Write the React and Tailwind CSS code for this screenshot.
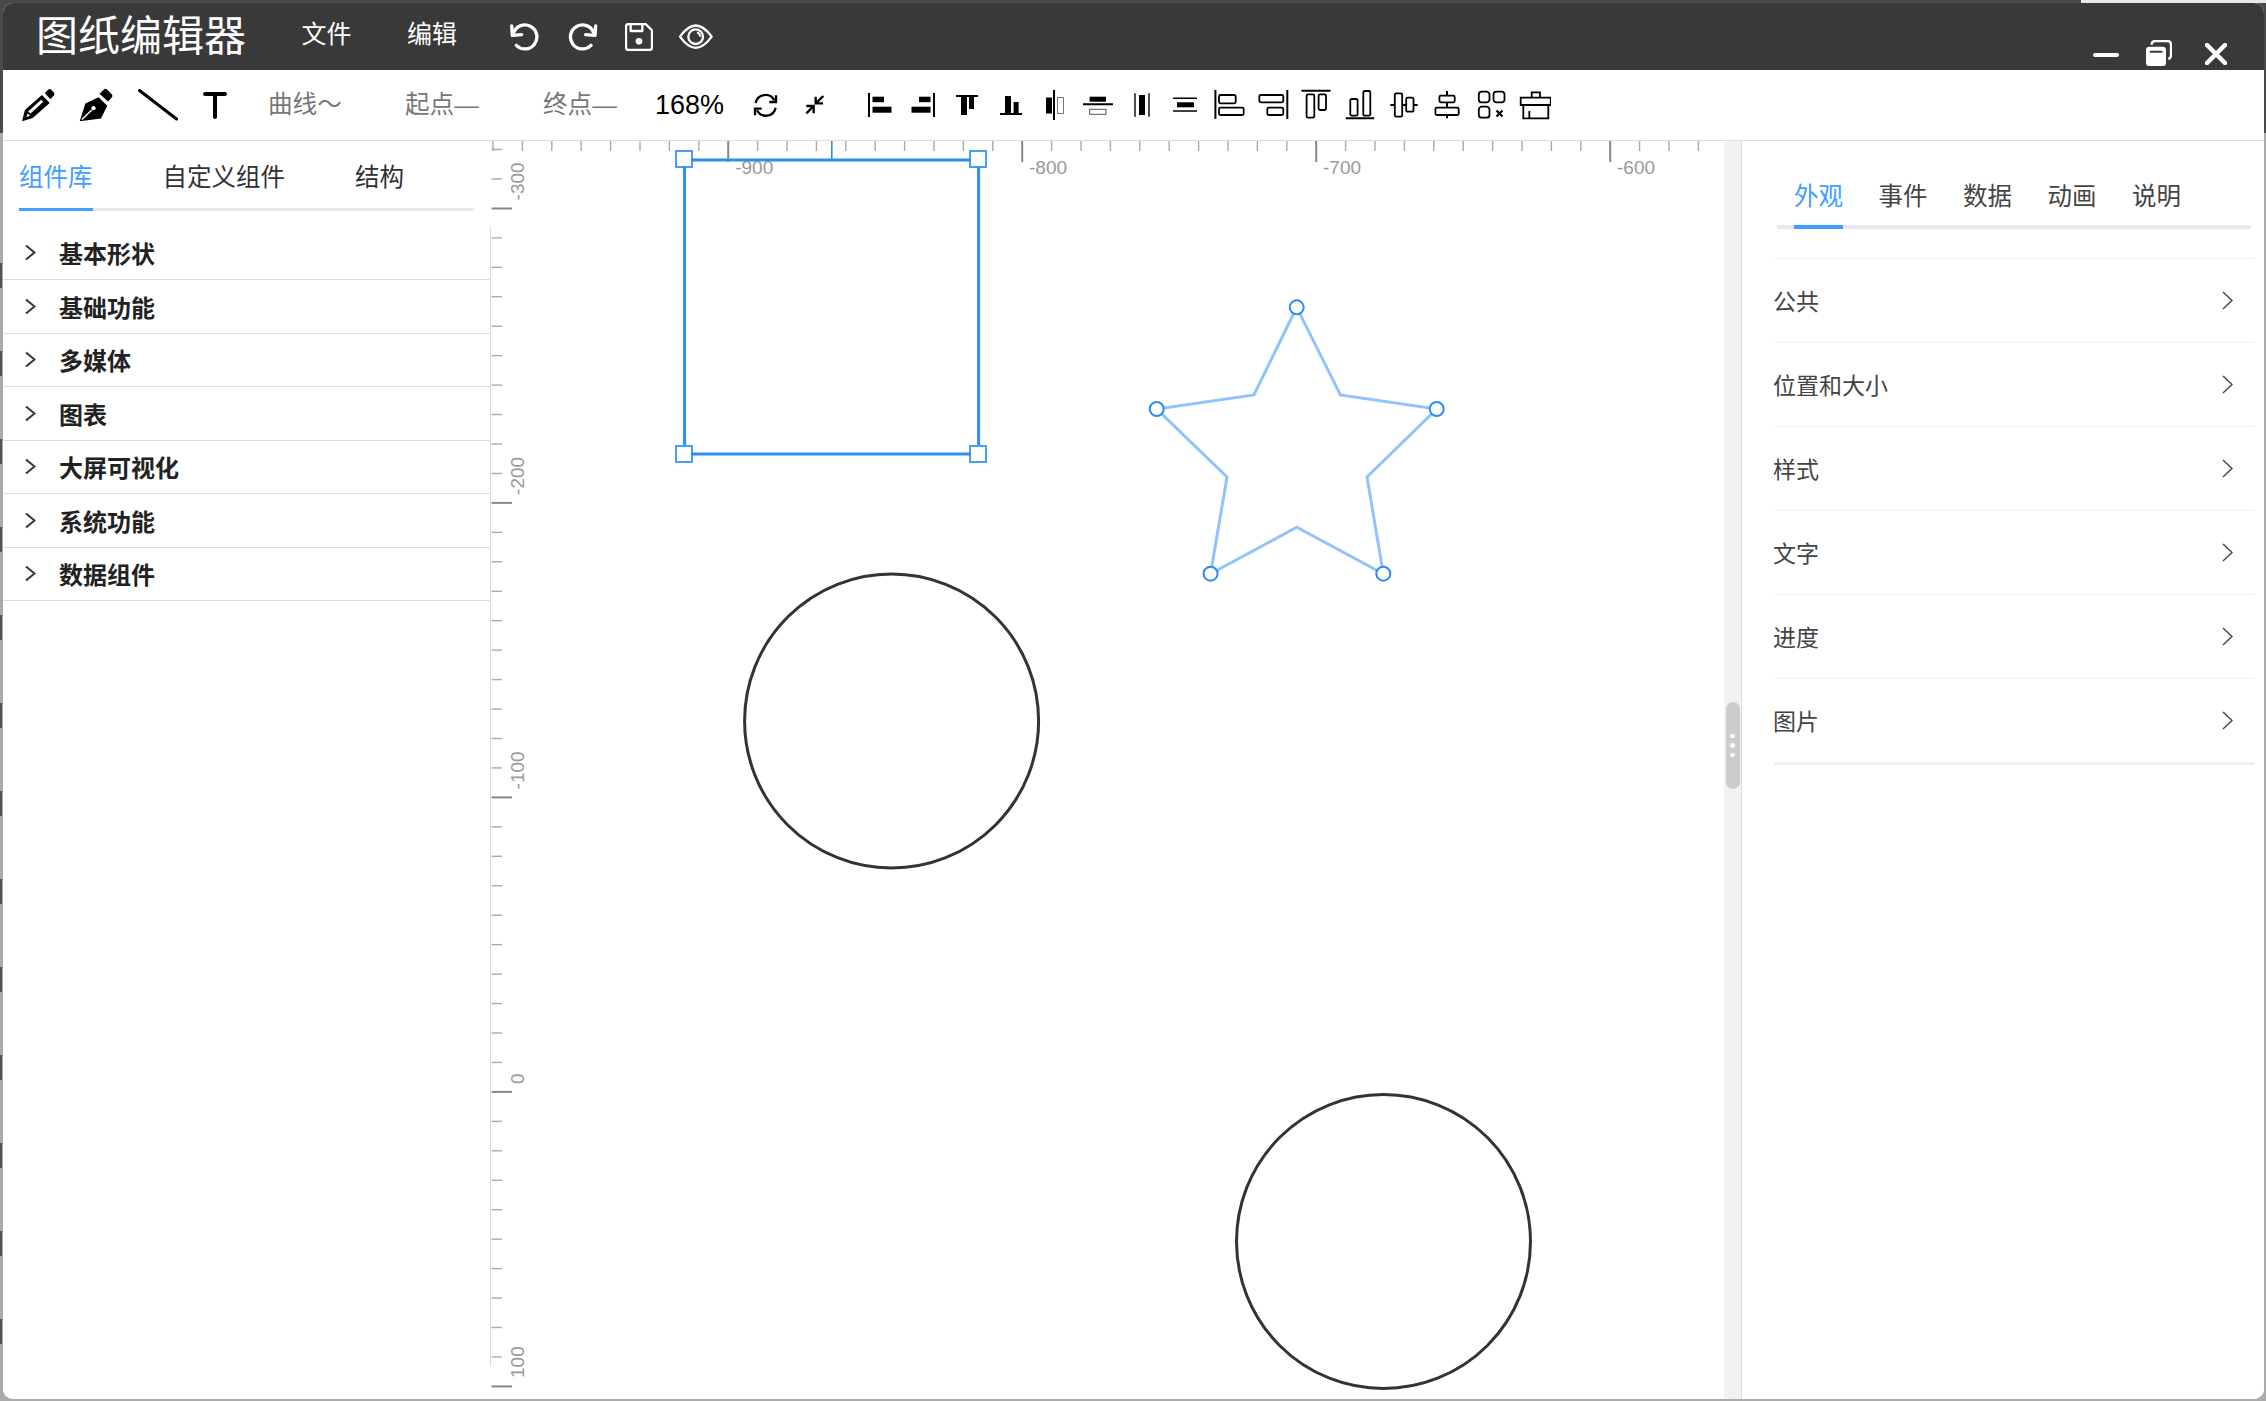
import React from "react";

const leftGroups = ["基本形状", "基础功能", "多媒体", "图表", "大屏可视化", "系统功能", "数据组件"];
const rightGroups = ["公共", "位置和大小", "样式", "文字", "进度", "图片"];
const rightTabs = ["外观", "事件", "数据", "动画", "说明"];

const Out = (props) => <rect fill="#fff" stroke="#000" strokeWidth="1.8" rx="1.5" {...props} />;
const Solid = (props) => <rect fill="#000" {...props} />;
const Ln = (props) => <line stroke="#000" strokeWidth="2" {...props} />;

// alignment buttons, drawn around a centre of 0,0
const alignIcons = [
  <><Ln x1="-11" y1="-12" x2="-11" y2="12" /><Solid x="-7.5" y="-8.3" width="11.5" height="5.5" /><Solid x="-7.5" y="1.7" width="19" height="6" /></>,
  <><Ln x1="11" y1="-12" x2="11" y2="12" /><Solid x="-4" y="-8.3" width="11.5" height="5.5" /><Solid x="-11.5" y="1.7" width="19" height="6" /></>,
  <><Ln x1="-11" y1="-9" x2="11" y2="-9" /><Solid x="-6" y="-8" width="6" height="18" /><Solid x="2" y="-8" width="5" height="12" /></>,
  <><Ln x1="-11" y1="9" x2="11" y2="9" /><Solid x="-6" y="-9" width="6" height="18" /><Solid x="2.6" y="-3" width="5" height="12" /></>,
  <><Ln x1="0" y1="-15" x2="0" y2="15" /><Solid x="-8" y="-7.5" width="6" height="16" /><rect x="3.5" y="-7.5" width="6" height="16" fill="#fff" stroke="#777" strokeWidth="1" /></>,
  <><Ln x1="-15" y1="-0.7" x2="15" y2="-0.7" /><Solid x="-8.4" y="-8.3" width="16.4" height="5" /><rect x="-8.4" y="4.3" width="16.4" height="5" fill="#fff" stroke="#555" strokeWidth="1" /></>,
  <><Ln x1="-7" y1="-11.7" x2="-7" y2="11.7" strokeWidth="1.4" /><Ln x1="7" y1="-11.7" x2="7" y2="11.7" strokeWidth="1.4" /><Solid x="-3" y="-10" width="6" height="20" /></>,
  <><Ln x1="-12" y1="-6.7" x2="12" y2="-6.7" strokeWidth="1.4" /><Ln x1="-12" y1="6" x2="12" y2="6" strokeWidth="1.4" /><Solid x="-8" y="-2.7" width="17" height="5" /></>,
  <><Ln x1="-13.6" y1="-15" x2="-13.6" y2="14" /><Out x="-10" y="-10" width="16.7" height="8.3" /><Out x="-10" y="2.7" width="24.7" height="7.3" /></>,
  <><Ln x1="14.3" y1="-15" x2="14.3" y2="14" /><Out x="-13.7" y="-10" width="24" height="7.3" /><Out x="-5.7" y="2.7" width="16" height="7.3" /></>,
  <><Ln x1="-14.5" y1="-14.3" x2="14.5" y2="-14.3" /><Out x="-9.4" y="-10.7" width="7.7" height="23.4" /><Out x="2.6" y="-10.7" width="7.4" height="15.7" /></>,
  <><Ln x1="-14.2" y1="13.3" x2="14.2" y2="13.3" /><Out x="-9.7" y="-6" width="7.3" height="16.7" /><Out x="3.3" y="-14" width="7" height="24.7" /></>,
  <><Ln x1="-13.7" y1="0" x2="13.7" y2="0" /><Out x="-9.2" y="-11.7" width="7.4" height="23.4" /><Out x="2.2" y="-7.3" width="7.3" height="14" /></>,
  <><Ln x1="0" y1="-14" x2="0" y2="13.3" /><Out x="-7.6" y="-9.3" width="15.3" height="6.6" /><Out x="-11.6" y="2.7" width="23.3" height="7.3" /></>,
  <><Out x="-12.2" y="-13.3" width="10.7" height="10.7" rx="3" /><Out x="2.5" y="-13.3" width="11" height="10.7" rx="3" /><Out x="-12.2" y="1.7" width="10.7" height="11" rx="3" /><path d="M5.5 5.5 L11.5 11.5 M11.5 5.5 L5.5 11.5" stroke="#000" strokeWidth="2.2" /></>,
  <><path d="M-3.3 -7.3 V-12.7 H5 V-7.3 M-14.3 -7.3 H15.7 V0 H-14.3 Z M-11.7 0 V13.3 H13.3 V0 M-5.7 6 V13.3" fill="none" stroke="#000" strokeWidth="1.8" /></>,
];

const hTicks = Array.from({ length: 42 }, (_, i) => i - 8);
const vTicks = Array.from({ length: 43 }, (_, i) => i - 2);
const hLabels = [["-900", 728.2], ["-800", 1022], ["-700", 1316], ["-600", 1610]];
const vLabels = [["-300", 208.4], ["-200", 502.9], ["-100", 797.4], ["0", 1091.9], ["100", 1386]];

function Canvas() {
  return (
    <div className="flex-1 relative bg-white">
      <svg className="absolute inset-0 w-full h-full" viewBox="490 141 1234 1258">
        {hTicks.map((i) => {
          const x = 728.2 + i * 29.4;
          const major = i % 10 === 0;
          return <line key={i} x1={x} y1="141" x2={x} y2={major ? 162 : 151} stroke={major ? "#888" : "#aaa"} strokeWidth={major ? 2 : 1.4} />;
        })}
        {vTicks.map((i) => {
          const y = 208.4 + i * 29.45;
          const major = i % 10 === 0;
          return <line key={i} x1="491.5" y1={y} x2={major ? 512 : 502} y2={y} stroke={major ? "#888" : "#aaa"} strokeWidth={major ? 2 : 1.4} />;
        })}
        <line x1="490" y1="227" x2="490" y2="1366" stroke="#ddd" strokeWidth="2" />
        <line x1="831.8" y1="141" x2="831.8" y2="160" stroke="#2d8cf0" strokeWidth="1.6" />
        {hLabels.map(([t, x]) => (
          <text key={t} x={x + 7} y="173.5" fontSize="19" fill="#999">{t}</text>
        ))}
        {vLabels.map(([t, y]) => (
          <text key={t} x="524" y={y - 8} fontSize="19" fill="#999" transform={`rotate(-90 524 ${y - 8})`}>{t}</text>
        ))}

        {[[684, 159], [978, 159], [684, 454], [978, 454]].map(([x, y]) => (
          <rect key={x + "-" + y} x={x - 8} y={y - 8} width="16" height="16" fill="#fff" stroke="#4a9ff5" strokeWidth="2" />
        ))}
        <path d="M691 160 H971 M691 454 H971 M684.6 167 V445 M978.6 167 V445" fill="none" stroke="#2d8cf0" strokeWidth="3" />

        <path d="M1296.7 307.3 L1340.4 395 L1436.7 409 L1367 477 L1383.3 573.7 L1296.7 527.3 L1210.6 573.7 L1227 477 L1156.7 409 L1253.9 395 Z" fill="none" stroke="#8fc4fb" strokeWidth="3" />
        {[[1296.7, 307.3], [1436.7, 409], [1383.3, 573.7], [1210.6, 573.7], [1156.7, 409]].map(([x, y]) => (
          <circle key={x} cx={x} cy={y} r="7" fill="#fff" stroke="#2d8cf0" strokeWidth="2" />
        ))}

        <circle cx="891.6" cy="721" r="147" fill="none" stroke="#333" strokeWidth="3" />
        <circle cx="1383.5" cy="1241.5" r="147" fill="none" stroke="#333" strokeWidth="3" />
      </svg>
    </div>
  );
}

function Chevron({ thin }) {
  return thin ? (
    <svg className="w-[11px] h-[19px] shrink-0" viewBox="0 0 11 19">
      <path d="M1 1 L10 9.5 L1 18" fill="none" stroke="#444" strokeWidth="1.4" />
    </svg>
  ) : (
    <svg className="w-[11px] h-[17px] shrink-0" viewBox="0 0 11 17">
      <path d="M1 1.5 L9.5 8.5 L1 15.5" fill="none" stroke="#333" strokeWidth="2" />
    </svg>
  );
}

function TitleBar() {
  return (
    <div className="h-[67px] bg-[#393939] flex items-center text-white shrink-0">
      <span className="ml-[33px] w-[265.5px] text-[42px] leading-[44px] mt-[1px]">图纸编辑器</span>
      <span className="w-[105.5px] text-[25px] leading-[28px] -mt-[5px]">文件</span>
      <span className="w-[102px] text-[25px] leading-[28px] -mt-[5px]">编辑</span>
      <svg className="w-[32px] h-[30px]" viewBox="30 20 96 90" fill="none" stroke="#fff" strokeWidth="10" strokeLinecap="round" strokeLinejoin="round">
        <path d="M38 32 L40 60 L68 58" />
        <path d="M44 52 A36 36 0 1 1 52 90" />
      </svg>
      <svg className="ml-[27px] w-[32px] h-[30px]" viewBox="210 20 96 90" fill="none" stroke="#fff" strokeWidth="10" strokeLinecap="round" strokeLinejoin="round">
        <path d="M293 32 L291 60 L263 58" />
        <path d="M287 52 A36 36 0 1 0 279 90" />
      </svg>
      <svg className="ml-[25px] w-[28px] h-[28px]" viewBox="378 20 84 84" fill="none" stroke="#fff" strokeWidth="7" strokeLinejoin="round">
        <path d="M389 23 H440 L459 42 V93 Q459 101 451 101 H389 Q381 101 381 93 V31 Q381 23 389 23 Z" />
        <path d="M395 24 V44 H430 V24" />
        <circle cx="420" cy="75" r="10" fill="#fff" stroke="none" />
      </svg>
      <svg className="ml-[25px] w-[36px] h-[28px]" viewBox="540 22 108 84" fill="none" stroke="#fff" strokeWidth="7">
        <path d="M546 63 Q593 -4 641 63 Q593 130 546 63 Z" strokeLinejoin="round" />
        <circle cx="593" cy="63" r="22" />
        <path d="M597 50 A13 13 0 0 1 606 63" strokeWidth="6" />
      </svg>
      <div className="ml-auto mr-[37px] self-start mt-[37px] flex items-start">
        <svg className="w-[26px] h-[26px]" viewBox="0 0 26 26">
          <line x1="2" y1="15" x2="24" y2="15" stroke="#fff" strokeWidth="4" strokeLinecap="round" />
        </svg>
        <svg className="ml-[27px] w-[26px] h-[26px]" viewBox="738 120 78 78">
          <path d="M755 134 Q755 123 767 123 H803 Q813 123 813 135 V165 Q813 175 805 177" fill="none" stroke="#fff" strokeWidth="7" />
          <rect x="738" y="140" width="60" height="58" rx="10" fill="#fff" />
          <line x1="752" y1="155" x2="785" y2="155" stroke="#393939" strokeWidth="6" strokeLinecap="round" />
        </svg>
        <svg className="ml-[33px] mt-[3px] w-[22px] h-[22px]" viewBox="0 0 22 22">
          <path d="M2 2 L20 20 M20 2 L2 20" stroke="#fff" strokeWidth="4.5" strokeLinecap="round" />
        </svg>
      </div>
    </div>
  );
}

function ToolBar() {
  return (
    <div className="h-[71px] bg-white border-b border-[#ddd] flex items-center shrink-0 text-[24.6px] leading-[28px] text-[#777]">
      <svg className="ml-[18px] w-[34px] h-[34px]" viewBox="35 22 96 96">
        <path d="M38 116 L46 84 L94 42 L116 64 L68 107 Z" fill="#000" />
        <path d="M55 88 L92 55 L98 61 L62 94 Z" fill="#fff" />
        <path d="M50 104 L54 93 L61 100 Z" fill="#fff" />
        <path d="M102 36 L112 26 Q116 23 120 26 L128 35 Q131 39 128 43 L118 54 Z" fill="#000" />
      </svg>
      <svg className="ml-[24px] w-[34px] h-[34px]" viewBox="210 22 96 96">
        <path d="M212 116 L228 66 L265 48 L290 72 L272 108 Z" fill="#000" />
        <path d="M268 38 L282 25 Q286 23 290 27 L303 40 Q306 44 303 48 L292 60 Z" fill="#000" />
        <path d="M218 111 L246 84" stroke="#fff" strokeWidth="4" />
        <circle cx="251" cy="79" r="6" fill="#fff" />
      </svg>
      <svg className="ml-[25px] w-[40px] h-[32px]" viewBox="0 0 40 32">
        <line x1="1.5" y1="1.5" x2="38.5" y2="30" stroke="#000" strokeWidth="3" strokeLinecap="round" />
      </svg>
      <svg className="ml-[25px] w-[24px] h-[28px]" viewBox="0 0 24 28">
        <path d="M2 3 H22 M12 3 V26" stroke="#000" strokeWidth="4" strokeLinecap="round" fill="none" />
      </svg>
      <span className="ml-[41px] w-[137px]">曲线～</span>
      <span className="w-[138px]">起点—</span>
      <span className="w-[112px]">终点—</span>
      <span className="w-[98px] text-[27px] text-black">168%</span>
      <svg className="w-[26px] h-[26px] mt-[2px]" viewBox="26 28 78 78" fill="none" stroke="#000" strokeWidth="7">
        <path d="M34 58 A30 30 0 0 1 90 50" />
        <path d="M95 35 V55 H75" />
        <path d="M94 72 A30 30 0 0 1 38 80" />
        <path d="M32 95 V75 H52" />
      </svg>
      <svg className="ml-[26px] w-[20px] h-[20px]" viewBox="178 37 60 60" fill="none" stroke="#000" strokeWidth="7">
        <path d="M233 40 L210 62 M210 42 V62 H232 M182 92 L204 70 M182 70 H204 V92" />
      </svg>
      <div className="ml-[33px] flex">
        {alignIcons.map((icon, i) => (
          <div key={i} className="w-[43.67px] flex justify-center">
            <svg className="w-[32px] h-[32px]" viewBox="-16 -16 32 32">{icon}</svg>
          </div>
        ))}
      </div>
    </div>
  );
}

function LeftPanel() {
  return (
    <div className="w-[487px] shrink-0 bg-white">
      <div className="ml-[16px] mr-[16px] h-[70px] pt-[25px] flex gap-[70px] border-b-[3px] border-[#e4e7ed] text-[24.5px] leading-[24px] text-[#303133]">
        <span className="h-[45px] border-b-[3px] border-[#409eff] text-[#409eff]">组件库</span>
        <span>自定义组件</span>
        <span>结构</span>
      </div>
      <div className="mt-[15.5px]">
        {leftGroups.map((g) => (
          <div key={g} className="h-[53.5px] border-b border-[#ddd] flex items-center pl-[22px]">
            <Chevron />
            <span className="ml-[23px] text-[24px] leading-[28px] font-bold text-[#222] mt-[5px]">{g}</span>
          </div>
        ))}
      </div>
    </div>
  );
}

function RightPanel() {
  return (
    <div className="w-[522px] shrink-0 bg-white">
      <div className="ml-[35px] w-[474px] h-[88px] pt-[43.5px] pl-[17px] flex gap-[35.5px] border-b-[4px] border-[#e4e7ed] text-[24.5px] leading-[24px] text-[#444]">
        {rightTabs.map((t, i) => (
          <span key={t} className={i === 0 ? "h-[44.5px] border-b-[4px] border-[#409eff] text-[#409eff]" : ""}>{t}</span>
        ))}
      </div>
      <div className="ml-[32px] w-[480px] mt-[29px] border-b-[3px] border-[#ebeef5]">
        {rightGroups.map((g) => (
          <div key={g} className="h-[84px] border-t border-[#ebeef5] flex items-center justify-between pr-[21px] text-[23px] leading-[28px] text-[#444]">
            <span className="mt-[2px] -ml-[1px]">{g}</span>
            <Chevron thin />
          </div>
        ))}
      </div>
    </div>
  );
}

export default function App() {
  return (
    <div className="relative w-[2266px] h-[1401px] overflow-hidden pt-[3px] pl-[3px] pr-[2px] pb-[2px] bg-[linear-gradient(#4a4a4a_133px,#ababab_133px)] [font-family:'Liberation_Sans','Noto_Sans_CJK_SC',sans-serif]">
      <div className="absolute top-0 right-0 w-[185px] h-[3px] bg-[#e8e8e8]"></div>
      <div className="absolute top-[200px] bottom-0 left-0 w-[2px] bg-[repeating-linear-gradient(#ababab_0,#ababab_63px,#4c5560_63px,#4c5560_88px)]"></div>
      <div className="w-full h-full rounded-[10px] overflow-hidden bg-white flex flex-col">
        <TitleBar />
        <ToolBar />
        <div className="flex flex-1 min-h-0">
          <LeftPanel />
          <Canvas />
          <div className="w-[18px] shrink-0 bg-[#f2f2f2] border-r border-[#ddd] relative">
            <div className="absolute top-[561px] left-[2px] w-[14px] h-[87px] rounded-[7px] bg-[#ccc] flex flex-col items-center justify-center gap-[5px] pr-[1px]">
              <span className="w-[4.5px] h-[4.5px] rounded-full bg-white"></span>
              <span className="w-[4.5px] h-[4.5px] rounded-full bg-white"></span>
              <span className="w-[4.5px] h-[4.5px] rounded-full bg-white"></span>
            </div>
          </div>
          <RightPanel />
        </div>
      </div>
    </div>
  );
}
